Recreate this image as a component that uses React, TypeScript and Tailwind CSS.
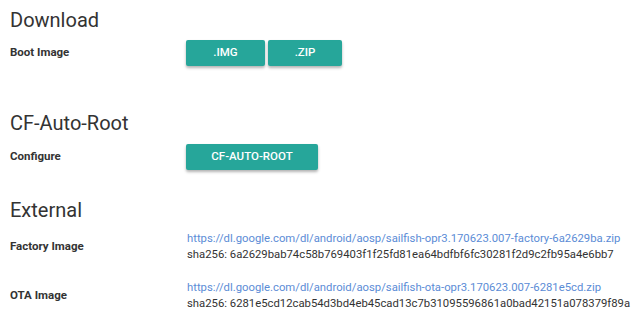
const font = { fontFamily: "Roboto, 'Noto Sans', sans-serif" };

function Heading({ children, className = "" }: { children: string; className?: string }) {
  return (
    <h2 className={`text-[20px] leading-6 text-[#333] ${className}`}>{children}</h2>
  );
}

function Btn({ label, w }: { label: string; w: string }) {
  return (
    <button
      className={`${w} h-[26px] rounded-[2px] bg-[#26a69a] text-[11.5px] font-medium text-white shadow-[0_2px_3px_rgba(0,0,0,0.3)]`}
    >
      {label}
    </button>
  );
}

function Row({ label, children, className = "" }: { label: string; children: React.ReactNode; className?: string }) {
  return (
    <div className={`flex items-center ${className}`}>
      <div className="w-[176px] shrink-0 text-[11.5px] font-bold text-[#333]">{label}</div>
      <div className="flex items-center gap-[3px]">{children}</div>
    </div>
  );
}

function External({ label, url, sha, className = "" }: { label: string; url: string; sha: string; className?: string }) {
  return (
    <div className={`flex items-center ${className}`}>
      <div className="w-[176px] shrink-0 text-[11.5px] font-bold text-[#333]">{label}</div>
      <div className="pl-px text-[11.3px] leading-4 whitespace-nowrap">
        <a className="block text-[#5b8cd6]" href="#">{url}</a>
        <div className="text-[#333]">sha256: {sha}</div>
      </div>
    </div>
  );
}

export default function App() {
  return (
    <div className="h-[329px] w-[640px] overflow-hidden bg-white pl-[10px] pt-2" style={font}>
      <Heading>Download</Heading>
      <Row label="Boot Image" className="mt-2 h-[26px]">
        <Btn label=".IMG" w="w-[79px]" />
        <Btn label=".ZIP" w="w-[74px]" />
      </Row>
      <div className="h-[45px]" />
      <Heading>CF-Auto-Root</Heading>
      <Row label="Configure" className="mt-[9px] h-[26px]">
        <Btn label="CF-AUTO-ROOT" w="w-[132px]" />
      </Row>
      <Heading className="mt-[28px]">External</Heading>
      <External
        className="mt-[9px]"
        label="Factory Image"
        url="https://dl.google.com/dl/android/aosp/sailfish-opr3.170623.007-factory-6a2629ba.zip"
        sha="6a2629bab74c58b769403f1f25fd81ea64bdfbf6fc30281f2d9c2fb95a4e6bb7"
      />
      <External
        className="mt-[17px]"
        label="OTA Image"
        url="https://dl.google.com/dl/android/aosp/sailfish-ota-opr3.170623.007-6281e5cd.zip"
        sha="6281e5cd12cab54d3bd4eb45cad13c7b31095596861a0bad42151a078379f89a"
      />
    </div>
  );
}
